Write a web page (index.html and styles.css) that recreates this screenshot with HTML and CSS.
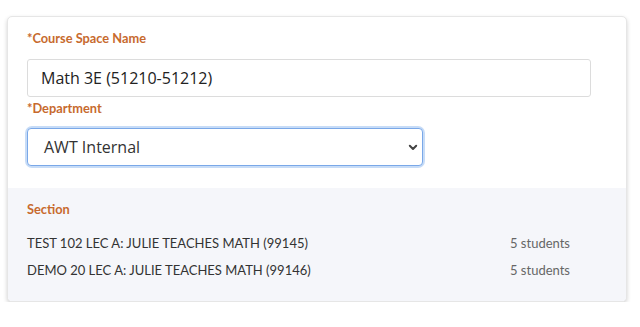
FILE: index.html
```html
<!DOCTYPE html>
<html>
<head>
    <title>Course Space</title>
    <link rel="stylesheet" href="styles.css">
</head>
<body>
<div class="card">
    <div class="card-top">
        <label class="field-label" for="spaceName">*Course Space Name</label>
        <input type="text" id="spaceName" class="text-input" value="Math 3E (51210-51212)">
        <label class="field-label dept-label" for="dept">*Department</label>
        <div class="select-wrap">
            <div class="select-box" id="dept">
                <span>AWT Internal</span>
                <svg class="chevron" width="10" height="7" viewBox="0 0 10 7">
                    <path d="M1.8 1.8 L5 5 L8.2 1.8" fill="none" stroke="#444" stroke-width="2" stroke-linecap="round" stroke-linejoin="round"/>
                </svg>
            </div>
        </div>
    </div>
    <div class="card-bottom">
        <div class="field-label">Section</div>
        <div class="section-list">
            <div class="section-row">
                <span>TEST 102 LEC A: JULIE TEACHES MATH (99145)</span>
                <span class="count">5 students</span>
            </div>
            <div class="section-row">
                <span>DEMO 20 LEC A: JULIE TEACHES MATH (99146)</span>
                <span class="count">5 students</span>
            </div>
        </div>
    </div>
</div>
</body>
</html>
```

FILE: styles.css
```css
body {
    font-family: Lato, "Open Sans", sans-serif;
    background-color: #ffffff;
    margin: 0;
    padding: 16px 13px 0 7px;
}
.card {
    background-color: white;
    border: 1px solid #e6e6e6;
    border-radius: 5px;
    box-shadow: 0 2px 4px rgba(0, 0, 0, 0.18);
    overflow: hidden;
    height: 286px;
    box-sizing: border-box;
    display: flex;
    flex-direction: column;
}
.card-top {
    padding: 14px 36px 22px 19px;
    display: flex;
    flex-direction: column;
}
.field-label {
    color: #c76a2e;
    font-size: 12.8px;
    font-weight: bold;
    line-height: 15px;
}
.text-input {
    margin-top: 13px;
    height: 38px;
    box-sizing: border-box;
    border: 1px solid #dcdcdc;
    border-radius: 3px;
    padding: 0 13px;
    font-family: "Open Sans", sans-serif;
    font-size: 16px;
    color: #222;
    width: 564px;
}
.dept-label {
    margin-top: 4px;
}
.select-wrap {
    margin-top: 12px;
    width: 396px;
    border-radius: 5px;
    box-shadow: 0 0 0 2px #c7dcf7;
}
.select-box {
    height: 38px;
    box-sizing: border-box;
    border: 1px solid #7aa8e8;
    border-radius: 4px;
    padding: 0 4px 0 16px;
    display: flex;
    align-items: center;
    justify-content: space-between;
    font-family: "Open Sans", sans-serif;
    font-size: 16px;
    color: #333;
}
.card-bottom {
    flex: 1;
    background-color: #f5f6fa;
    padding: 14px 19px;
}
.section-list {
    margin-top: 13px;
}
.section-row {
    display: flex;
    justify-content: space-between;
    width: 543px;
    font-size: 13px;
    color: #333;
    line-height: 27px;
}
.count {
    color: #666;
}
```
